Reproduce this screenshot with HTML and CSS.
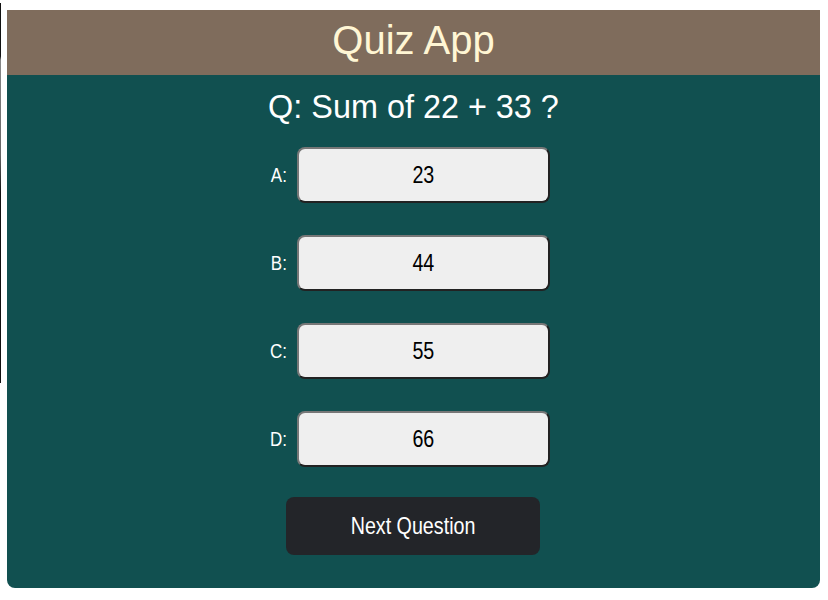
FILE: index.html
```html
<!DOCTYPE html>
<html lang="en">
<head>
<meta charset="utf-8">
<title>Quiz App</title>
<link rel="stylesheet" href="styles.css">
</head>
<body>
<div class="edge-line"></div>
<div class="card">
  <header class="header"><h1 class="title">Quiz App</h1></header>
  <main class="body">
    <h2 class="question">Q: Sum of 22 + 33 ?</h2>
    <div class="answers">
      <div class="row"><span class="label"><span class="narrow-r">A:</span></span><button class="answer"><span class="narrow">23</span></button></div>
      <div class="row"><span class="label"><span class="narrow-r">B:</span></span><button class="answer"><span class="narrow">44</span></button></div>
      <div class="row"><span class="label"><span class="narrow-r">C:</span></span><button class="answer"><span class="narrow">55</span></button></div>
      <div class="row"><span class="label"><span class="narrow-r">D:</span></span><button class="answer"><span class="narrow">66</span></button></div>
    </div>
    <button class="next"><span class="narrow">Next Question</span></button>
  </main>
</div>
</body>
</html>
```
FILE: styles.css
```css
html, body {
  margin: 0;
  padding: 0;
  background: #ffffff;
}
body {
  font-family: "Liberation Sans", Arial, sans-serif;
  position: relative;
  width: 828px;
  height: 600px;
  overflow: hidden;
}
.edge-line {
  position: absolute;
  left: 0;
  top: 3px;
  width: 1px;
  height: 380px;
  background: linear-gradient(#111 0, #111 14%, #888 15%, #666 40%, #111 50%, #111 100%);
}
.card {
  margin: 10px 8px 0 7px;
  width: 813px;
  border-radius: 0 0 8px 8px;
  overflow: hidden;
}
.header {
  height: 65px;
  background: #7f6c5c;
  display: flex;
  align-items: center;
  justify-content: center;
  padding-bottom: 5px;
  box-sizing: border-box;
}
.title {
  margin: 0;
  font-size: 40px;
  font-weight: normal;
  color: #fff6d4;
}
.body {
  background: #115050;
  padding: 14px 0 33px;
  display: flex;
  flex-direction: column;
  align-items: center;
}
.question {
  margin: 0;
  font-size: 32.4px;
  font-weight: normal;
  color: #ffffff;
  line-height: 37px;
}
.answers {
  margin-top: 21px;
  display: flex;
  flex-direction: column;
  gap: 32px;
}
.row {
  display: flex;
  align-items: center;
  gap: 10px;
  margin-left: -8px;
}
.label {
  font-size: 20px;
  color: #ffffff;
  width: 17px;
  display: flex;
  justify-content: flex-end;
}
.narrow {
  display: inline-block;
  transform: scaleX(0.82);
  transform-origin: center;
}
.narrow-r {
  display: inline-block;
  transform: scaleX(0.85);
  transform-origin: right center;
}
.answer {
  width: 253px;
  height: 56px;
  background: #efefef;
  border: 2px solid;
  border-color: #777777 #222222 #222222 #777777;
  border-radius: 8px;
  font-family: "Liberation Sans", Arial, sans-serif;
  font-size: 24px;
  color: #000000;
  padding: 0;
}
.next {
  margin-top: 30px;
  margin-right: 1px;
  width: 254px;
  height: 58px;
  background: #232529;
  border: none;
  border-radius: 8px;
  color: #ffffff;
  font-family: "Liberation Sans", Arial, sans-serif;
  font-size: 24px;
  padding: 0;
}
```
